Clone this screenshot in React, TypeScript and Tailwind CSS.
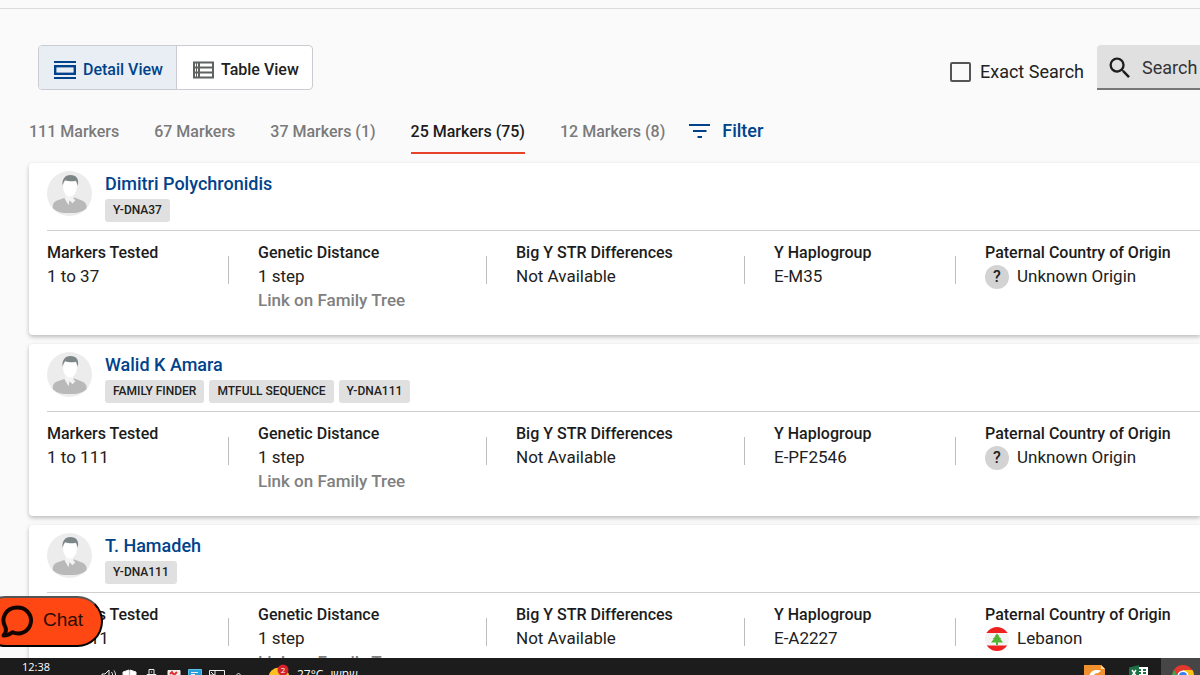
import React, { useState } from 'react';

const TABS = [
  { id: '111', label: '111 Markers' },
  { id: '67', label: '67 Markers' },
  { id: '37', label: '37 Markers (1)' },
  { id: '25', label: '25 Markers (75)' },
  { id: '12', label: '12 Markers (8)' },
];

type Match = {
  name: string;
  tests: string[];
  tested: string;
  haplogroup: string;
  country: string | null;
};

const MATCHES: Match[] = [
  { name: 'Dimitri Polychronidis', tests: ['Y-DNA37'], tested: '1 to 37', haplogroup: 'E-M35', country: null },
  { name: 'Walid K Amara', tests: ['FAMILY FINDER', 'MTFULL SEQUENCE', 'Y-DNA111'], tested: '1 to 111', haplogroup: 'E-PF2546', country: null },
  { name: 'T. Hamadeh', tests: ['Y-DNA111'], tested: '1 to 111', haplogroup: 'E-A2227', country: 'Lebanon' },
];

export default function App() {
  const [view, setView] = useState('detail');
  const [tab, setTab] = useState('25');

  return (
    <div className="relative flex h-screen flex-col overflow-hidden bg-[#fafafa] font-['Roboto',sans-serif] text-[#212121]">
      <main className="flex-1 overflow-hidden">
        <div className="h-[9px] border-b border-[#dcdcdc]" />

        {/* View switch + search */}
        <div className="mt-9 flex h-[45px] justify-between pl-[38px]">
          <div className="flex overflow-hidden rounded border border-[#c9ccd0] bg-white text-base font-medium">
            <button
              onClick={() => setView('detail')}
              className={`flex items-center gap-[6px] px-[14px] pt-1 pr-[13px] ${view === 'detail' ? 'bg-[#e9eef4] text-[#00438a]' : ''}`}
            >
              <DetailIcon />
              Detail View
            </button>
            <button
              onClick={() => setView('table')}
              className={`flex items-center gap-[6px] border-l border-[#c9ccd0] px-[14px] pt-1 pr-[13px] ${view === 'table' ? 'bg-[#e9eef4] text-[#00438a]' : ''}`}
            >
              <TableIcon />
              Table View
            </button>
          </div>

          <div className="flex">
            <label className="mr-[13px] flex items-center gap-[9px] pt-[9px] text-lg">
              <input type="checkbox" className="h-5 w-[21px] appearance-none rounded-[2px] border-2 border-[#555] checked:bg-[#00438a]" />
              Exact Search
            </label>
            <label className="flex w-[103px] items-center gap-2 rounded-tl border-b-2 border-[#777] bg-[#e0e0e0] pt-[3px] pl-[9px]">
              <SearchIcon />
              <input type="text" aria-label="Search" placeholder="Search" className="min-w-0 flex-1 bg-transparent text-lg outline-none placeholder:text-[#333]" />
            </label>
          </div>
        </div>

        {/* Marker levels */}
        <nav className="mt-[29px] flex items-start gap-[35px] pl-[29px] text-base font-medium text-[#7a7a7a]">
          {TABS.map(t => (
            <button
              key={t.id}
              onClick={() => setTab(t.id)}
              className={`border-b-2 pt-px pb-2 leading-6 ${tab === t.id ? 'border-[#e8432a] text-[#1c1c1c]' : 'border-transparent'}`}
            >
              {t.label}
            </button>
          ))}
          <button className="-ml-3 flex items-center gap-[10px] text-lg leading-6 text-[#00438a]">
            <FilterIcon />
            Filter
          </button>
        </nav>

        <div className="mt-[9px] flex flex-col gap-[9px] pl-[29px]">
          {MATCHES.map(m => <MatchCard key={m.name} match={m} />)}
        </div>
      </main>

      <Taskbar />

      <button className="absolute bottom-7 -left-5 flex h-[51px] w-[123px] items-center gap-[9px] rounded-full border-2 border-t-[#555] border-r-black border-b-black border-l-black bg-[#ff4713] pb-[2px] pl-[18px] font-['Liberation_Sans',sans-serif] text-[19px] text-[#2a0b02]">
        <ChatIcon />
        Chat
      </button>
    </div>
  );
}

// --- MATCH CARD ---
function MatchCard({ match }: { match: Match }) {
  return (
    <article className="rounded-l bg-white pt-2 pb-[23px] pl-[18px] shadow-[0_2px_4px_rgba(0,0,0,0.25)]">
      <div className="flex gap-[13px] border-b border-[#cfcfcf] pb-2">
        <Avatar />
        <div>
          <a href="#" className="block text-lg leading-[25px] font-medium text-[#00438a]">{match.name}</a>
          <div className="mt-[3px] flex gap-[5px]">
            {match.tests.map(t => (
              <span key={t} className="rounded-[3px] bg-[#e0e0e0] px-2 text-xs leading-[23px] font-medium">{t}</span>
            ))}
          </div>
        </div>
      </div>

      <div className="grid grid-cols-[182fr_258fr_258fr_211fr_244fr] pt-[10px] text-[17px] leading-6 whitespace-nowrap">
        <Field title="Markers Tested" first>{match.tested}</Field>
        <Field title="Genetic Distance">
          1 step
          <a href="#" className="block font-medium text-[#808080]">Link on Family Tree</a>
        </Field>
        <Field title="Big Y STR Differences">Not Available</Field>
        <Field title="Y Haplogroup">{match.haplogroup}</Field>
        <Field title="Paternal Country of Origin" last>
          <div className="flex gap-2">
            {match.country ? <LebanonFlag /> : (
              <span className="mt-px flex h-6 w-6 items-center justify-center rounded-full bg-[#d3d3d3] text-base font-medium">?</span>
            )}
            {match.country || 'Unknown Origin'}
          </div>
        </Field>
      </div>
    </article>
  );
}

function Field({ title, first, last, children }: any) {
  return (
    <div className={`flex items-start justify-between ${first ? '' : 'pl-[29px]'}`}>
      <div>
        <div className="text-base leading-[23px] font-medium text-[#1c1c1c]">{title}</div>
        {children}
      </div>
      {!last && <div className="mt-[15px] h-7 w-px bg-[#bdbdbd]" />}
    </div>
  );
}

// --- ICONS ---
function DetailIcon() {
  return (
    <svg width="24" height="24" viewBox="0 0 24 24" fill="none" stroke="currentColor" strokeWidth="2">
      <path d="M1 4h22M1 20h22" />
      <rect x="2.2" y="8.2" width="19.6" height="7.6" strokeWidth="2.4" />
    </svg>
  );
}

function TableIcon() {
  return (
    <svg width="24" height="24" viewBox="0 0 24 24" fill="none" stroke="#5f6360" strokeWidth="2">
      <rect x="3" y="4.500" width="19" height="15" />
      <path d="M3 9.500h19M3 14.500h19M8 4.500v15" />
      <path d="M5.500 4.500v15" strokeWidth="1" />
    </svg>
  );
}

function SearchIcon() {
  return (
    <svg width="28" height="28" viewBox="0 0 24 24" fill="#1c1c1c" className="shrink-0">
      <path d="M15.5 14h-.79l-.28-.27A6.47 6.47 0 0 0 16 9.5 6.5 6.5 0 1 0 9.5 16c1.61 0 3.09-.59 4.23-1.57l.27.28v.79l5 4.99L20.49 19l-4.99-5zm-6 0C7.01 14 5 11.99 5 9.5S7.01 5 9.5 5 14 7.01 14 9.5 11.99 14 9.5 14z" />
    </svg>
  );
}

function FilterIcon() {
  return (
    <svg width="24" height="24" viewBox="0 0 24 24" fill="none" stroke="currentColor" strokeWidth="2.2">
      <path d="M1 6h21M5 12h13.500M9.500 18h4.500" />
    </svg>
  );
}

function ChatIcon() {
  return (
    <svg width="34" height="34" viewBox="0 0 34 34" fill="none" stroke="#120500" strokeWidth="4" strokeLinejoin="round">
      <path d="M5.500 23.500C.5 15 5 3.500 17.500 3.500c8 0 13.500 6 13.500 13S25.500 29.500 18 29.500c-2 0-4-.5-5.500-1.200C10 30.500 7 31.500 3.500 31.500c2-2 3-5 2-8z" />
    </svg>
  );
}

function Avatar() {
  return (
    <svg width="45" height="45" viewBox="0 0 46 46" className="shrink-0">
      <circle cx="23" cy="23" r="23" fill="#ececec" />
      <path d="M6 38c-.5-4 1-7 5-8.200l8-2.800h9l7 2.800c4 1.200 6 4.200 5.500 8.200C36 42 30 43 23 43S10 42 6 38z" fill="#b9b9b9" />
      <path d="M19 24h8v4l2 2-3 3-3-3-1 5-4-7z" fill="#f3f3f3" />
      <ellipse cx="23.500" cy="16.500" rx="7" ry="9.500" fill="#fff" />
      <path d="M16 15c-1-6 2-11 8-11 6 0 9 4 7.500 11-.8-2-1-3.500-2-5-4 1-8 .5-11-.5-1 1.500-2 3-2.500 5.500z" fill="#7d8687" />
    </svg>
  );
}

function LebanonFlag() {
  return (
    <svg width="24" height="24" viewBox="0 0 24 24" className="mt-px shrink-0">
      <defs>
        <clipPath id="flag-round"><circle cx="12" cy="12" r="12" /></clipPath>
      </defs>
      <g clipPath="url(#flag-round)">
        <path d="M0 0h24v24H0z" fill="#f3f3f3" />
        <path d="M0 0h24v6H0zM0 18.500h24V24H0z" fill="#ee2020" />
        <path d="M12 6.500l2.500 3h-1l3 2.500h-1.200l2.700 3.500h-5V18h-2v-2.500H6l2.700-3.500H7.500l3-2.500h-1z" fill="#53b432" />
      </g>
    </svg>
  );
}

// --- TASKBAR ---
function Taskbar() {
  return (
    <footer className="flex h-[17px] shrink-0 items-start justify-between overflow-hidden bg-[#1c1c1c] font-['Open_Sans','DejaVu_Sans',sans-serif] text-white">
      <div className="flex items-start">
        <time className="mt-px ml-[22px] w-7 text-[11px] leading-4">12:38</time>
        <svg width="210" height="24" viewBox="0 0 210 24" fill="none" stroke="#eee" className="ml-[30px] shrink-0">
          <path d="M0 19l2-2 2 2M155 18.500l3.500-3.500 3.500 3.500" />
          <path d="M22 16h3l4-4v11l-4-4h-3zM31.500 14c1.500 2 1.500 4 0 6M34 12.500c2 3 2 6 0 9" />
          <path d="M43 14l6-2v11l-6-2zM50 12l6 2v7l-6 2z" fill="#fff" />
          <path d="M69 16.500v-5h5v5M67 16.500h9v8h-9zM71 14h1" />
          <path d="M88 12.500h12v12H88z" fill="#eee" />
          <path d="M90 16l2-2 2 3 3-3" stroke="#d33" strokeWidth="2" />
          <path d="M108.500 11.500h13v13h-13z" fill="#2a9fd8" stroke="#58c3ee" />
          <path d="M111 14.500h7M111 16.500h4" />
          <path d="M129.500 12.500h15v10h-15zM130 17h5v-4M131 14l3 3" />
          <circle cx="199" cy="20" r="10.500" fill="#ffbf1f" stroke="none" />
          <circle cx="203" cy="12" r="5.500" fill="#d3222b" stroke="none" />
          <text x="203" y="15" fill="#fff" stroke="none" fontSize="8" textAnchor="middle">2</text>
        </svg>
        <span className="mt-[9px] ml-[7px] flex gap-[7px] text-xs leading-4">
          <span>27°C</span>
          <span dir="rtl">שמשי</span>
        </span>
      </div>
      <svg width="124" height="24" viewBox="0 0 124 24" className="shrink-0">
        <path d="M85 0h39v24H85z" fill="#464646" />
        <path d="M8 7h17l4 4v13H8z" fill="#f0912d" />
        <path d="M25 7v4h4z" fill="#ffd9a8" />
        <path d="M13 20c0-5 3-8 8-8 2 0 3 0 4 1l-3 2c-3 0-5 2-5 5z" fill="#fff" />
        <path d="M60 9h12v15H60z" fill="#fff" />
        <path d="M62 12h3M67 12h3M62 15h3M67 15h3" stroke="#1d7044" strokeWidth="2" />
        <path d="M53 9.500l10-2.500v17H53z" fill="#1d7044" />
        <path d="M56 12l4 6M60 12l-4 6" stroke="#fff" strokeWidth="1.500" />
        <circle cx="107" cy="18" r="11" fill="#e5382c" />
        <path d="M107 12h9.500a11 11 0 0 1 1.500 6v6h-11z" fill="#fbc116" />
        <path d="M98 12l5 8v4h-7v-6c0-2 1-4 2-6z" fill="#2da94f" />
        <circle cx="107" cy="18" r="5.500" fill="#fff" />
        <circle cx="107" cy="18" r="4" fill="#3b7ded" />
      </svg>
    </footer>
  );
}
